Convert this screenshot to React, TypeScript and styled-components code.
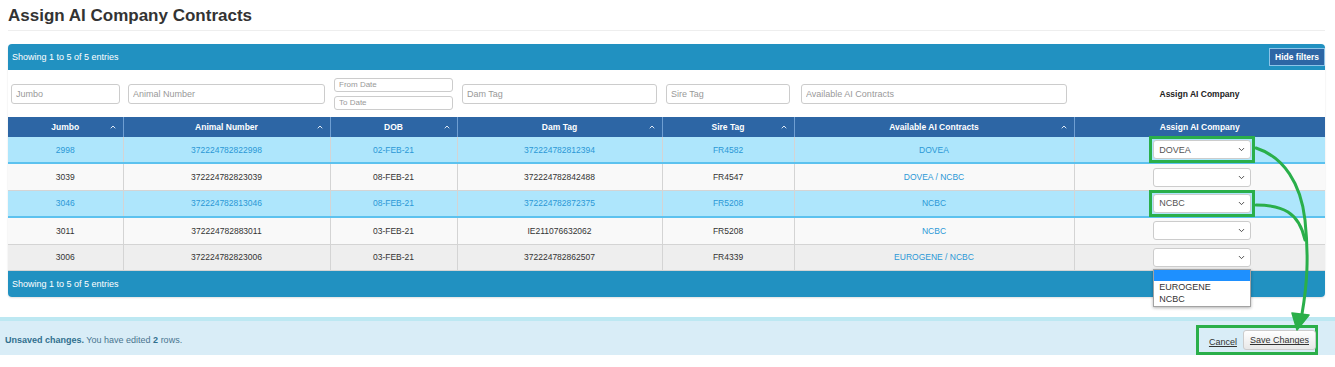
import React from 'react';
import styled, { createGlobalStyle, css } from 'styled-components';
import { ChevronDown, ChevronUp } from 'lucide-react';

const GlobalStyle = createGlobalStyle`
	html, body {
		margin: 0;
		padding: 0;
		background: #fff;
	}
	body {
		font-family: "Liberation Sans", Arial, Helvetica, sans-serif;
		color: #333;
	}
`;

const GREEN = '#2aaf4a';
const LINK = '#2b98d6';

const Page = styled.div`
	position: relative;
	width: 1335px;
	height: 367px;
	overflow: hidden;
`;

const Content = styled.div`
	padding: 0 10px 0 8px;
`;

const Title = styled.h1`
	margin: 6px 0 0;
	padding-bottom: 4px;
	border-bottom: 1px solid #eee;
	font-size: 17px;
	line-height: 20px;
	font-weight: bold;
	color: #333;
`;

const Panel = styled.div`
	margin-top: 13px;
	border-radius: 4px;
	box-shadow: 0 1px 2px rgba(0, 0, 0, 0.12);
`;

const PanelBar = styled.div<{ $bottom?: boolean }>`
	height: 26px;
	background: #2191c1;
	color: #fff;
	font-size: 9px;
	display: flex;
	align-items: center;
	justify-content: space-between;
	padding: 0 0 0 4px;
	border-radius: ${(p) => (p.$bottom ? '0 0 4px 4px' : '4px 4px 0 0')};
`;

const HideButton = styled.button`
	height: 18px;
	padding: 0 5px;
	background: #2d66a5;
	border: 1px solid #8cc3e8;
	color: #fff;
	font-family: inherit;
	font-size: 8.5px;
	font-weight: bold;
	border-radius: 0;
`;

const Table = styled.table`
	width: 100%;
	border-collapse: collapse;
	table-layout: fixed;
	font-size: 8.5px;
`;

const FilterCell = styled.td<{ $pad: number }>`
	height: 47px;
	padding: 0 ${(p) => p.$pad}px;
	vertical-align: middle;
	text-align: center;
	font-weight: bold;
	color: #222;
`;

const FilterInput = styled.input<{ $small?: boolean }>`
	display: block;
	width: 100%;
	height: ${(p) => (p.$small ? 14 : 20)}px;
	box-sizing: border-box;
	border: 1px solid #ccc;
	border-radius: 3px;
	padding: 0 4px;
	font-family: inherit;
	font-size: ${(p) => (p.$small ? 8 : 9)}px;
	color: #555;
	background: #fff;
	&::placeholder {
		color: #999;
	}
`;

const DateStack = styled.div`
	display: flex;
	flex-direction: column;
	gap: 4px;
`;

const HeadCell = styled.th<{ $first?: boolean }>`
	height: 20px;
	padding: 0 6px;
	background: #2d66a5;
	color: #fff;
	font-weight: bold;
	border-left: ${(p) => (p.$first ? 'none' : '1px solid #6f9fd2')};
`;

const HeadInner = styled.div`
	display: grid;
	grid-template-columns: 1fr auto 1fr;
	align-items: center;
	> svg {
		justify-self: end;
	}
`;

type RowState = 'edited' | 'plain' | 'hover';

const Row = styled.tr<{ $state: RowState }>`
	background: ${(p) => (p.$state === 'edited' ? '#aee6fc' : p.$state === 'hover' ? '#eeeeee' : '#f9f9f9')};
	color: ${(p) => (p.$state === 'edited' ? LINK : '#333')};
	border-bottom: ${(p) => (p.$state === 'edited' ? '2px solid #5cc2ef' : '1px solid #d4d4d4')};
`;

const Cell = styled.td<{ $link?: boolean }>`
	height: 25.4px;
	padding: 0 4px;
	text-align: center;
	vertical-align: middle;
	border-left: 1px solid #d4d4d4;
	${(p) =>
		p.$link &&
		css`
			color: ${LINK};
		`}
	&:first-child {
		border-left: none;
	}
`;

const SelectBox = styled.div<{ $marked?: boolean }>`
	position: relative;
	display: inline-block;
	width: 98px;
	vertical-align: middle;
	margin-left: 5px;
	${(p) =>
		p.$marked &&
		css`
			outline: 3px solid ${GREEN};
			outline-offset: 1px;
		`}
	> svg {
		position: absolute;
		right: 5px;
		top: 5px;
		pointer-events: none;
	}
`;

const Select = styled.select`
	appearance: none;
	display: block;
	width: 100%;
	height: 19px;
	box-sizing: border-box;
	border: 1px solid #ccc;
	border-radius: 3px;
	background: #fff;
	padding: 0 16px 0 5px;
	font-family: inherit;
	font-size: 9px;
	color: #555;
`;

const Menu = styled.ul`
	position: absolute;
	top: calc(100% + 2px);
	left: 0;
	width: 100%;
	box-sizing: border-box;
	margin: 0;
	padding: 0 0 1px;
	list-style: none;
	background: #fff;
	border: 1px solid #a3a3a3;
	box-shadow: 0 1px 3px rgba(0, 0, 0, 0.3);
	text-align: left;
	z-index: 2;
`;

const MenuItem = styled.li<{ $active?: boolean }>`
	height: ${(p) => (p.$active ? 11 : 12)}px;
	line-height: 12px;
	padding: 0 5px;
	font-size: 9px;
	color: #333;
	background: ${(p) => (p.$active ? '#1e90ff' : 'transparent')};
`;

const UnsavedBar = styled.div`
	margin-top: 20px;
	height: 38px;
	box-sizing: border-box;
	border-top: 4px solid #bde8f2;
	background: #d9edf7;
	padding: 5px 17px 0 5px;
	display: flex;
	align-items: center;
	justify-content: space-between;
	font-size: 9px;
	color: #4a7590;
	> p {
		margin: 0;
	}
	b {
		color: #31708f;
	}
`;

const Actions = styled.div`
	display: flex;
	align-items: center;
	gap: 6px;
	height: 30px;
	box-sizing: border-box;
	border: 3px solid ${GREEN};
	padding: 0 0 0 10px;
`;

const CancelLink = styled.a`
	color: #333;
	text-decoration: underline;
	font-size: 9px;
	padding-top: 4px;
`;

const SaveButton = styled.button`
	height: 20px;
	padding: 0 6px;
	border: 1px solid #ccc;
	border-radius: 3px;
	background: linear-gradient(#ffffff, #e8e8e8);
	font-family: inherit;
	font-size: 9px;
	color: #333;
	text-decoration: underline;
	margin-right: -1px;
`;

const Annotation = styled.svg`
	position: absolute;
	left: 0;
	top: 0;
	pointer-events: none;
	z-index: 3;
`;

const columns = [
	{ label: 'Jumbo', width: 115, pad: 3 },
	{ label: 'Animal Number', width: 207, pad: 5 },
	{ label: 'DOB', width: 127, pad: 4 },
	{ label: 'Dam Tag', width: 205, pad: 5 },
	{ label: 'Sire Tag', width: 132, pad: 4 },
	{ label: 'Available AI Contracts', width: 280, pad: 7 },
	{ label: 'Assign AI Company', width: 251, pad: 5 },
];

type Rec = {
	jumbo: string;
	animal: string;
	dob: string;
	dam: string;
	sire: string;
	contracts: string;
	assigned: string;
	state: RowState;
	open?: boolean;
};

const records: Rec[] = [
	{ jumbo: '2998', animal: '372224782822998', dob: '02-FEB-21', dam: '372224782812394', sire: 'FR4582', contracts: 'DOVEA', assigned: 'DOVEA', state: 'edited' },
	{ jumbo: '3039', animal: '372224782823039', dob: '08-FEB-21', dam: '372224782842488', sire: 'FR4547', contracts: 'DOVEA / NCBC', assigned: '', state: 'plain' },
	{ jumbo: '3046', animal: '372224782813046', dob: '08-FEB-21', dam: '372224782872375', sire: 'FR5208', contracts: 'NCBC', assigned: 'NCBC', state: 'edited' },
	{ jumbo: '3011', animal: '372224782883011', dob: '03-FEB-21', dam: 'IE211076632062', sire: 'FR5208', contracts: 'NCBC', assigned: '', state: 'plain' },
	{ jumbo: '3006', animal: '372224782823006', dob: '03-FEB-21', dam: '372224782862507', sire: 'FR4339', contracts: 'EUROGENE / NCBC', assigned: '', state: 'hover', open: true },
];

const App: React.FC = () => {
	return (
		<Page>
			<GlobalStyle />
			<Content>
				<Title>Assign AI Company Contracts</Title>
				<Panel>
					<PanelBar>
						<span>Showing 1 to 5 of 5 entries</span>
						<HideButton>Hide filters</HideButton>
					</PanelBar>
					<Table>
						<colgroup>
							{columns.map((c) => (
								<col key={c.label} style={{ width: c.width }} />
							))}
						</colgroup>
						<thead>
							<tr>
								<FilterCell $pad={columns[0].pad}><FilterInput placeholder="Jumbo" /></FilterCell>
								<FilterCell $pad={columns[1].pad}><FilterInput placeholder="Animal Number" /></FilterCell>
								<FilterCell $pad={columns[2].pad}>
									<DateStack>
										<FilterInput $small placeholder="From Date" />
										<FilterInput $small placeholder="To Date" />
									</DateStack>
								</FilterCell>
								<FilterCell $pad={columns[3].pad}><FilterInput placeholder="Dam Tag" /></FilterCell>
								<FilterCell $pad={columns[4].pad}><FilterInput placeholder="Sire Tag" /></FilterCell>
								<FilterCell $pad={columns[5].pad}><FilterInput placeholder="Available AI Contracts" /></FilterCell>
								<FilterCell $pad={columns[6].pad}>Assign AI Company</FilterCell>
							</tr>
							<tr>
								{columns.map((c, i) => (
									<HeadCell key={c.label} $first={i === 0}>
										<HeadInner>
											<span />
											<span>{c.label}</span>
											{i < columns.length - 1 ? <ChevronUp size={8} strokeWidth={3} color="#dfe9f5" /> : <span />}
										</HeadInner>
									</HeadCell>
								))}
							</tr>
						</thead>
						<tbody>
							{records.map((r) => (
								<Row key={r.jumbo} $state={r.state}>
									<Cell>{r.jumbo}</Cell>
									<Cell>{r.animal}</Cell>
									<Cell>{r.dob}</Cell>
									<Cell>{r.dam}</Cell>
									<Cell>{r.sire}</Cell>
									<Cell $link>{r.contracts}</Cell>
									<Cell>
										<SelectBox $marked={r.state === 'edited'}>
											<Select defaultValue={r.assigned}>
												<option value=""></option>
												{r.contracts.split(' / ').map((o) => (
													<option key={o} value={o}>{o}</option>
												))}
											</Select>
											<ChevronDown size={9} strokeWidth={2.5} color="#444" />
											{r.open && (
												<Menu>
													<MenuItem $active />
													<MenuItem>EUROGENE</MenuItem>
													<MenuItem>NCBC</MenuItem>
												</Menu>
											)}
										</SelectBox>
									</Cell>
								</Row>
							))}
						</tbody>
					</Table>
					<PanelBar $bottom>
						<span>Showing 1 to 5 of 5 entries</span>
					</PanelBar>
				</Panel>
			</Content>
			<UnsavedBar>
				<p>
					<b>Unsaved changes.</b> You have edited <b>2</b> rows.
				</p>
				<Actions>
					<CancelLink href="#">Cancel</CancelLink>
					<SaveButton>Save Changes</SaveButton>
				</Actions>
			</UnsavedBar>
			<Annotation width={1335} height={367} viewBox="0 0 1335 367">
				<g fill="none" stroke={GREEN} strokeWidth={3} strokeLinecap="round">
					<path d="M1256 148 C1284 157, 1301 184, 1305 220 C1309 258, 1307 285, 1302 314" />
					<path d="M1256 205 C1282 205, 1299 212, 1305 240" />
				</g>
				<polygon points="1292,313 1309,315 1297,330" fill={GREEN} stroke={GREEN} strokeWidth={1.5} strokeLinejoin="round" />
			</Annotation>
		</Page>
	);
};

export default App;
